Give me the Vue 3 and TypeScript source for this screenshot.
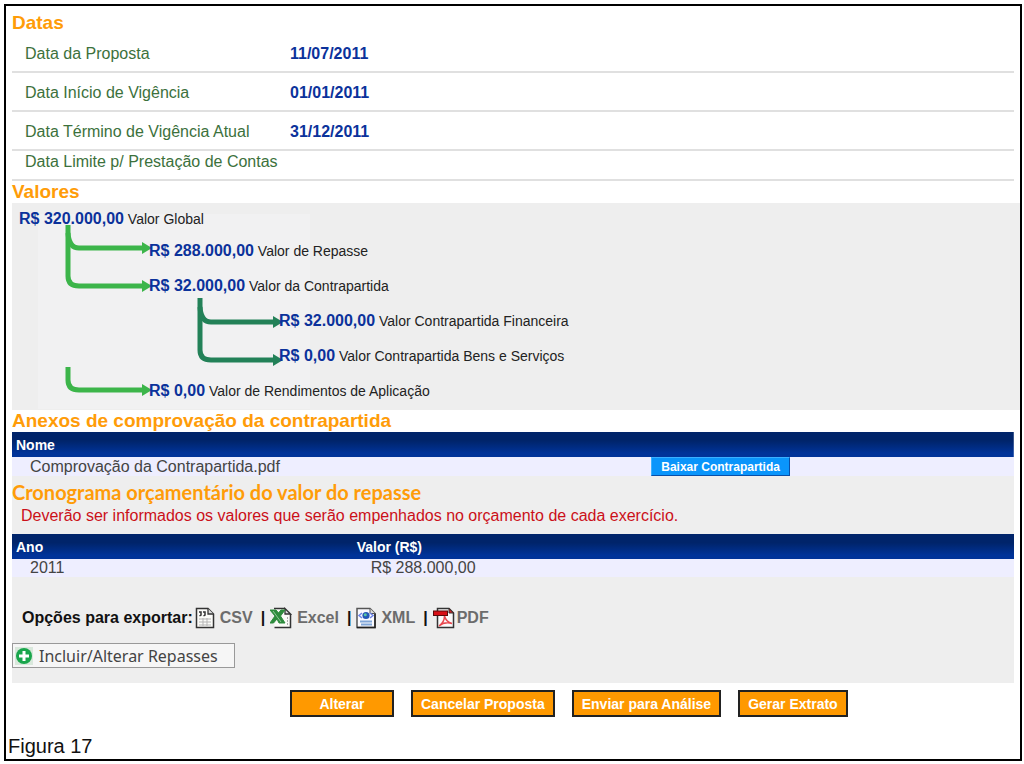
<script setup lang="ts">
interface DateRow {
  label: string
  value: string
}

interface ValueRow {
  amount: string
  label: string
  level: number
}

const dates: DateRow[] = [
  { label: 'Data da Proposta', value: '11/07/2011' },
  { label: 'Data Início de Vigência', value: '01/01/2011' },
  { label: 'Data Término de Vigência Atual', value: '31/12/2011' },
  { label: 'Data Limite p/ Prestação de Contas', value: '' },
]

const values: ValueRow[] = [
  { amount: 'R$ 320.000,00', label: 'Valor Global', level: 0 },
  { amount: 'R$ 288.000,00', label: 'Valor de Repasse', level: 1 },
  { amount: 'R$ 32.000,00', label: 'Valor da Contrapartida', level: 1 },
  { amount: 'R$ 32.000,00', label: 'Valor Contrapartida Financeira', level: 2 },
  { amount: 'R$ 0,00', label: 'Valor Contrapartida Bens e Serviços', level: 2 },
  { amount: 'R$ 0,00', label: 'Valor de Rendimentos de Aplicação', level: 1 },
]

const actions: string[] = ['Alterar', 'Cancelar Proposta', 'Enviar para Análise', 'Gerar Extrato']
</script>

<template>
  <main class="page">
    <figure class="frame">
      <section>
        <h2 class="title">Datas</h2>
        <dl class="dates">
          <div v-for="row in dates" :key="row.label" class="date-row" :class="{ short: !row.value }">
            <dt>{{ row.label }}</dt>
            <dd>{{ row.value }}</dd>
          </div>
        </dl>
      </section>

      <section>
        <h2 class="title">Valores</h2>
        <div class="values">
          <svg class="links" width="310" height="207" viewBox="0 0 310 207" aria-hidden="true">
            <rect x="26" y="11" width="272" height="195" fill="#f1f1f2" />
            <g fill="none" stroke="#3cb54a" stroke-width="5">
              <path d="M56 22V73Q56 83 67 83H132" />
              <path d="M56 30Q57 45 67 45H132" />
              <path d="M56 164V177Q56 187 67 187H132" />
            </g>
            <g fill="#3cb54a">
              <path d="M130 39l10 6-10 6z" />
              <path d="M130 77l10 6-10 6z" />
              <path d="M130 181l10 6-10 6z" />
            </g>
            <g fill="none" stroke="#238158" stroke-width="5">
              <path d="M188 95V147Q188 157 199 157H263" />
              <path d="M188 104Q189 119 199 119H263" />
            </g>
            <g fill="#238158">
              <path d="M261 113l10 6-10 6z" />
              <path d="M261 151l10 6-10 6z" />
            </g>
          </svg>
          <ul class="tree">
            <li v-for="row in values" :key="row.label" :class="'level-' + row.level">
              <strong>{{ row.amount }}</strong> {{ row.label }}
            </li>
          </ul>
        </div>
      </section>

      <section>
        <h2 class="title">Anexos de comprovação da contrapartida</h2>
        <table class="grid">
          <colgroup>
            <col class="col-file" />
            <col />
          </colgroup>
          <thead>
            <tr>
              <th scope="col">Nome</th>
              <th></th>
            </tr>
          </thead>
          <tbody>
            <tr>
              <td>Comprovação da Contrapartida.pdf</td>
              <td><button type="button" class="download">Baixar Contrapartida</button></td>
            </tr>
          </tbody>
        </table>
      </section>

      <section class="schedule">
        <h2 class="title alt">Cronograma orçamentário do valor do repasse</h2>
        <p class="notice">Deverão ser informados os valores que serão empenhados no orçamento de cada exercício.</p>
        <table class="grid">
          <colgroup>
            <col class="col-year" />
            <col />
          </colgroup>
          <thead>
            <tr>
              <th scope="col">Ano</th>
              <th scope="col">Valor (R$)</th>
            </tr>
          </thead>
          <tbody>
            <tr>
              <td>2011</td>
              <td>R$ 288.000,00</td>
            </tr>
          </tbody>
        </table>

        <div class="export">
          <span class="export-label">Opções para exportar:</span>
          <a href="#csv">
            <svg width="20" height="22" viewBox="0 0 20 22" aria-hidden="true">
              <path d="M1.5 1.5H13L18.5 7V20.5H1.5Z" fill="#fbfbf8" stroke="#333" stroke-width="1.5" />
              <path d="M13 1.5V7H18.5" fill="#ddd" stroke="#333" stroke-width="1.3" />
              <path d="M4 5H6V8L4.5 9M8 5H10V8L8.5 9" fill="none" stroke="#333" stroke-width="1.5" />
              <path d="M4 12H16M4 15H16M4 18H16M8 11V19M12 11V19" stroke="#b5b5b5" stroke-width="1" />
            </svg>
            <span>CSV</span>
          </a>
          <span class="bar">|</span>
          <a href="#excel">
            <svg width="22" height="22" viewBox="0 0 22 22" aria-hidden="true">
              <path d="M4.5 1.5H15L20.5 7V20.5H4.5Z" fill="#fbfbf8" />
              <path d="M4 1.5H15M4.5 20.5H20.5V7" fill="none" stroke="#333" stroke-width="1.5" />
              <path d="M15 1.5V7H20.5Z" fill="#ddd" stroke="#333" stroke-width="1.3" />
              <path d="M17.5 10V18" stroke="#aaa" stroke-width="1" stroke-dasharray="2 1" />
              <path d="M0 3H6L8.5 6L11 3H15L10.5 9L15 16H9L7 12L3.5 16H0L5 9Z" fill="#2e8b3d" stroke="#2e8b3d" stroke-width="1" />
              <path d="M3 4L11 15" stroke="#8fc795" stroke-width="1" />
            </svg>
            <span>Excel</span>
          </a>
          <span class="bar">|</span>
          <a href="#xml">
            <svg width="20" height="22" viewBox="0 0 20 22" aria-hidden="true">
              <path d="M1 1.5H14L19 6.5V20.5H1Z" fill="#fbfbff" stroke="#555" stroke-width="1.5" />
              <path d="M1 20.5H19V6.5" fill="none" stroke="#222" stroke-width="1.5" />
              <path d="M14 1.5V6.5H19" fill="#ddd" stroke="#555" />
              <path d="M6 6L3 8.5L6 11M14 6L17 8.5L14 11" fill="none" stroke="#6f86e8" stroke-width="1.5" />
              <circle cx="10" cy="8.5" r="3.6" fill="#2458b8" />
              <circle cx="9.3" cy="7.7" r="1.5" fill="#57c7a0" />
              <path d="M4 14.5H16M5 17.5H16" stroke="#7fa5d8" stroke-width="1.8" />
            </svg>
            <span>XML</span>
          </a>
          <span class="bar">|</span>
          <a href="#pdf" class="tight">
            <svg width="22" height="22" viewBox="0 0 22 22" aria-hidden="true">
              <path d="M4.5 1.5H16L20.5 6V20.5H4.5Z" fill="#fbfafa" stroke="#333" stroke-width="1.5" />
              <path d="M16 1.5V6H20.5Z" fill="#d22" stroke="#333" />
              <rect x="0.5" y="4" width="14" height="4.5" fill="#d80f16" stroke="#5a0a0a" />
              <path d="M11.5 9C12.5 13 15 15.5 19 16.5C14 15 9 16.5 6 19C9.5 16.5 11.5 13 11.5 9" fill="none" stroke="#e8484f" stroke-width="1.5" />
            </svg>
            <span>PDF</span>
          </a>
        </div>

        <button type="button" class="include">
          <svg width="18" height="18" viewBox="0 0 18 18" aria-hidden="true">
            <rect width="18" height="18" fill="#d9e8dc" />
            <circle cx="9" cy="9" r="8" fill="#1aa64c" />
            <path d="M9 4V14M4 9H14" stroke="#fff" stroke-width="3" />
          </svg>
          Incluir/Alterar Repasses
        </button>
      </section>

      <div class="actions">
        <button v-for="name in actions" :key="name" type="button">{{ name }}</button>
      </div>

      <figcaption>Figura 17</figcaption>
    </figure>
  </main>
</template>

<style>
body {
  margin: 0;
  background: #fff;
}
</style>

<style scoped>
.page {
  padding: 4px 2px 2px 4px;
  font-family: "Liberation Sans", Arial, sans-serif;
  font-size: 16px;
  line-height: 18px;
  color: #444;
}

.frame {
  margin: 0;
  padding: 6px 0 0 6px;
  border: 2px solid #000;
}

.title {
  margin: 0;
  font-size: 19px;
  line-height: 22px;
  font-weight: bold;
  color: #ff9c08;
}

.title.alt {
  font-family: Lato, "Open Sans", sans-serif;
  font-size: 20px;
}

.dates {
  margin: 0 6px 0 0;
}

.date-row {
  box-sizing: border-box;
  display: flex;
  align-items: center;
  height: 39px;
  padding: 2px 0 0 13px;
  border-bottom: 2px solid #e0e0e0;
}

.date-row.short {
  height: 30px;
  align-items: flex-start;
}

.date-row dt {
  width: 265px;
  color: #3c713c;
}

.date-row dd {
  margin: 0;
  font-weight: bold;
  color: #0b329b;
}

.values {
  position: relative;
  background: #eee;
}

.links {
  position: absolute;
  left: 0;
  top: 0;
}

.tree {
  position: relative;
  list-style: none;
  margin: 0;
  padding: 1px 0 1px 7px;
  font-size: 14px;
  line-height: 35px;
  color: #222;
}

.tree .level-0 {
  line-height: 30px;
}

.tree .level-1 {
  padding-left: 130px;
}

.tree .level-2 {
  padding-left: 260px;
}

.tree strong {
  font-size: 16px;
  line-height: 18px;
  color: #0b329b;
}

.grid {
  width: calc(100% - 6px);
  border-collapse: collapse;
  table-layout: fixed;
}

.col-file {
  width: 62%;
}

.col-year {
  width: 34%;
}

.grid th {
  height: 25px;
  padding: 0 4px;
  text-align: left;
  font-size: 14px;
  color: #fff;
}

.grid thead tr {
  background: linear-gradient(#00246a 35%, #003399 85%);
}

.grid td {
  height: 18px;
  padding: 0 18px;
  background: #eef;
}

.download {
  display: block;
  height: 19px;
  padding: 0 9px;
  border: 1px solid;
  border-color: #3cb0ff #0a4fa8 #0a4fa8 #3cb0ff;
  background: #0a95fb;
  color: #fff;
  font: bold 12px/16px "Liberation Sans", Arial, sans-serif;
}

.schedule {
  margin-right: 6px;
  padding: 5px 0 15px;
  background: #eee;
}

.schedule .grid {
  width: 100%;
}

.notice {
  margin: 4px 0 9px;
  padding-left: 9px;
  color: #cb1019;
}

.export {
  display: flex;
  align-items: center;
  gap: 8px;
  margin: 30px 0 14px;
  padding-left: 10px;
  font-weight: bold;
  color: #111;
}

.export a {
  display: flex;
  align-items: center;
  gap: 5px;
  color: #6c6c6c;
  text-decoration: none;
}

.export-label {
  margin-right: -6px;
}

.bar {
  margin-right: -3px;
}

.export a.tight {
  gap: 2px;
}

.include {
  display: flex;
  align-items: center;
  gap: 6px;
  height: 25px;
  padding: 0 16px 0 2px;
  border: 1px solid #999;
  background: #f6f6f6;
  color: #444;
  font: 16px/20px "Noto Sans", "Open Sans", sans-serif;
}

.actions {
  display: flex;
  gap: 17px;
  padding: 7px 0 18px 278px;
}

.actions button {
  min-width: 104px;
  height: 27px;
  padding: 0 8px;
  border: 2px solid #222;
  background: #ff9900;
  color: #fff;
  font: bold 14px/20px "Liberation Sans", Arial, sans-serif;
}

figcaption {
  margin-left: -4px;
  padding-bottom: 2px;
  font-size: 20px;
  line-height: 22px;
  color: #111;
}
</style>
